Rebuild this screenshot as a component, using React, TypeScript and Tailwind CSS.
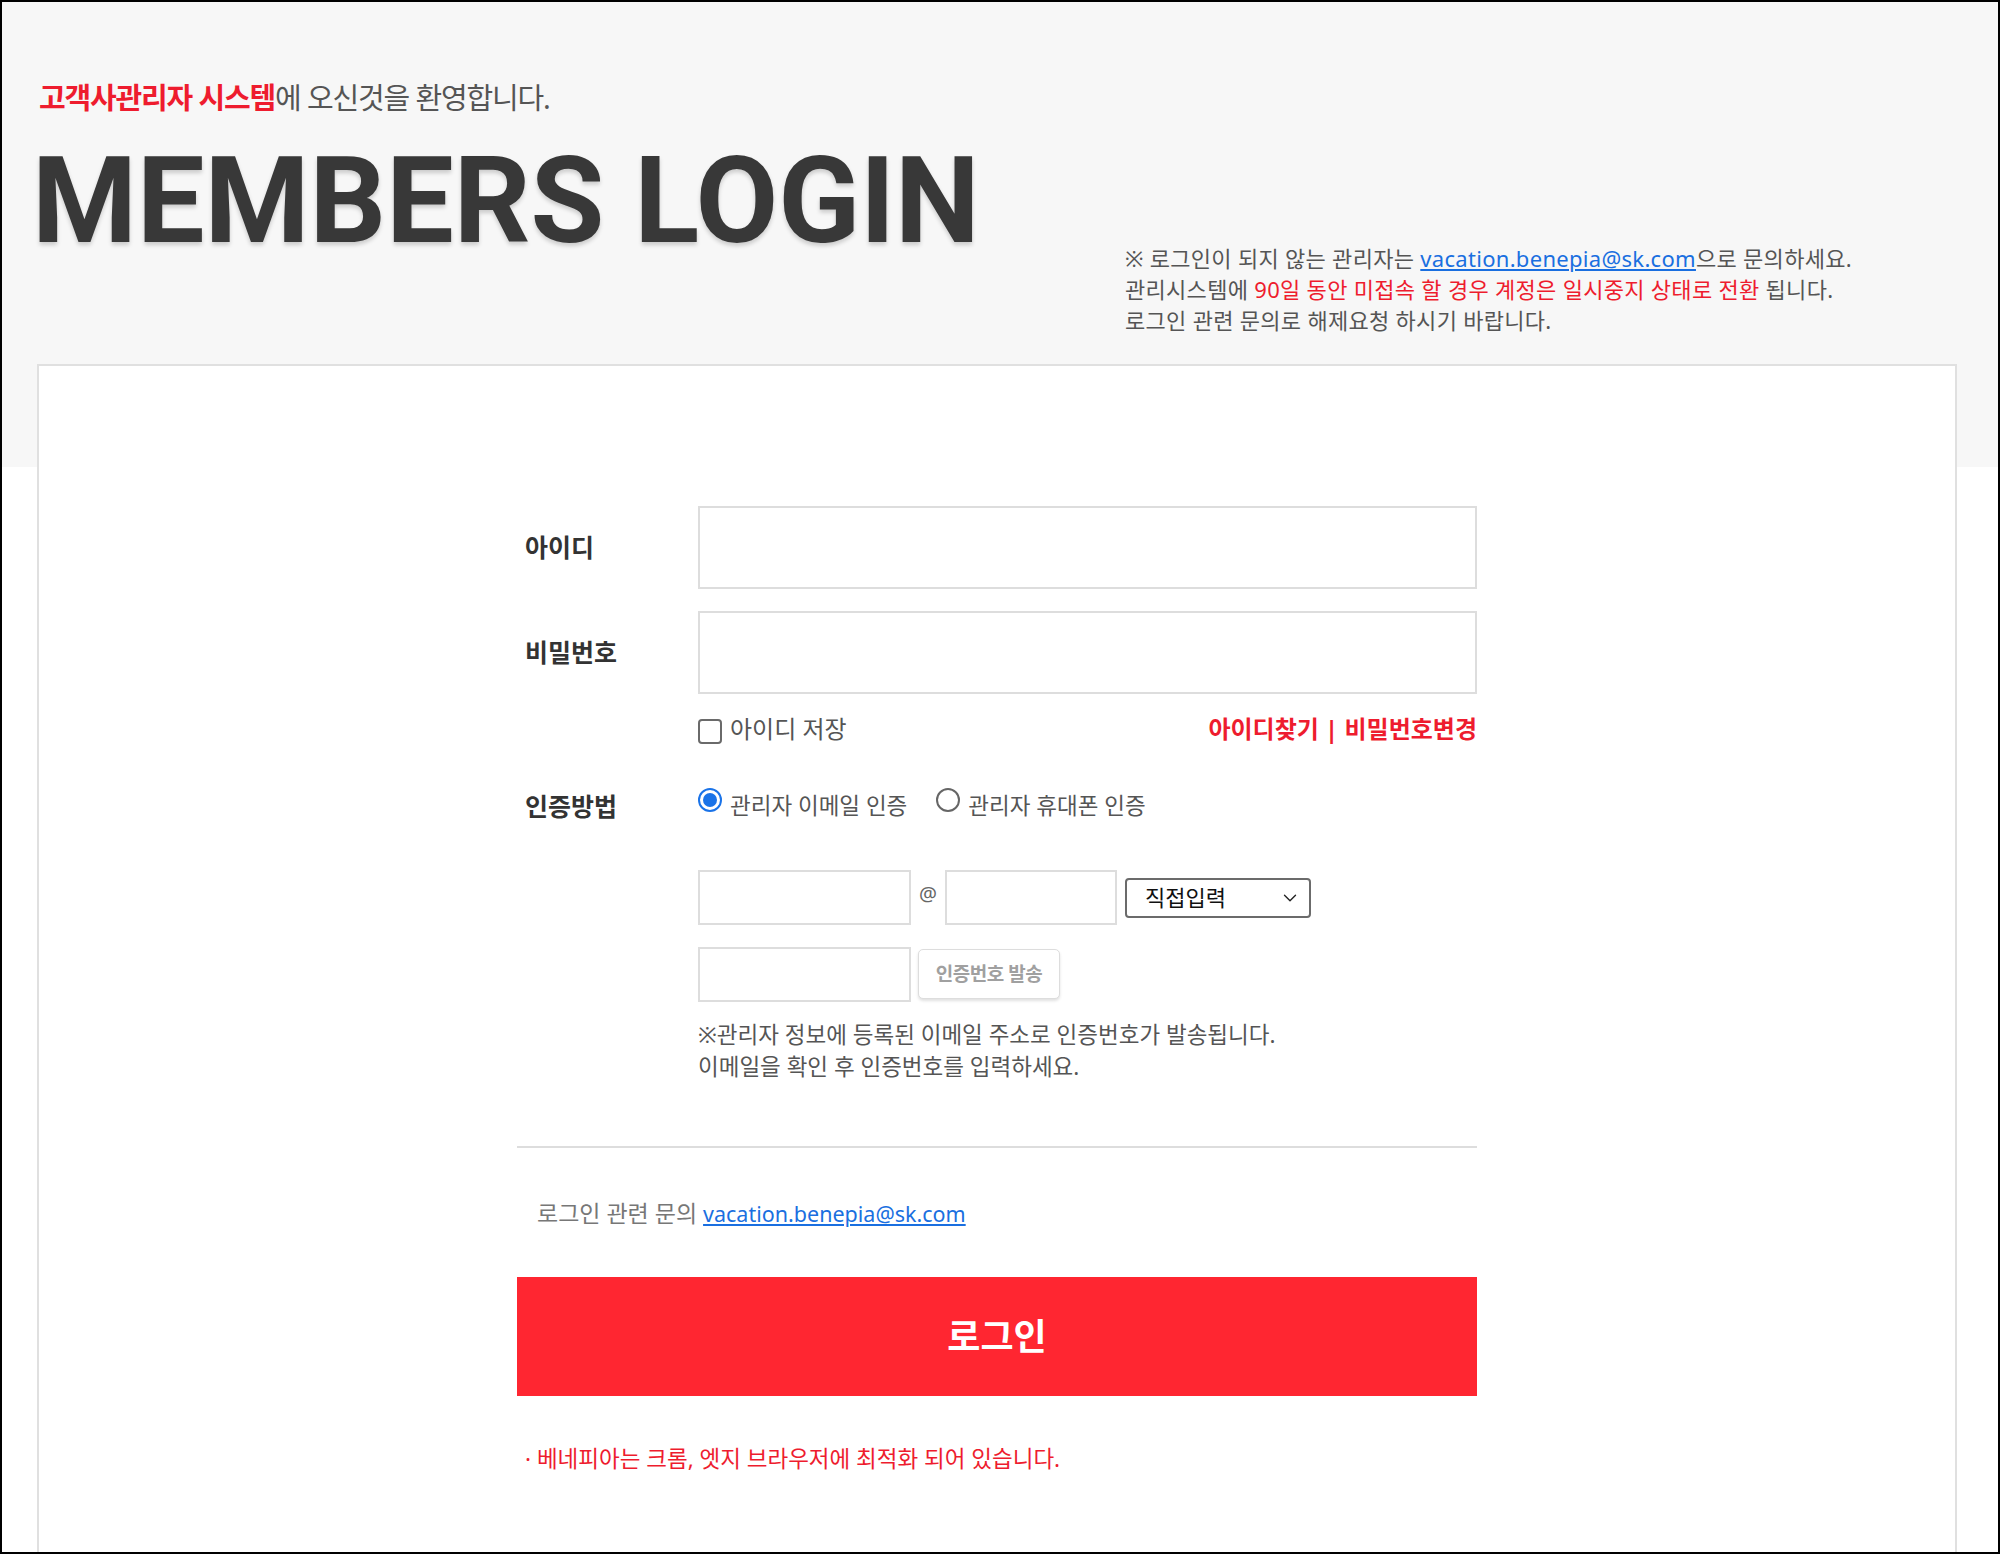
import { ChevronDown } from "lucide-react";

const red = "text-[#ee1c2e]";

function Radio({ checked }: { checked?: boolean }) {
    return checked ? (
        <span className="w-[24px] h-[24px] rounded-full border-2 border-[#1a73e8] bg-white flex items-center justify-center shrink-0">
            <span className="block w-[14px] h-[14px] rounded-full bg-[#1a73e8]" />
        </span>
    ) : (
        <span className="block w-[24px] h-[24px] rounded-full border-2 border-[#666] bg-white shrink-0" />
    );
}

export default function App() {
    return (
        <div className="w-[2000px] h-[1554px] overflow-hidden border-2 border-black bg-[linear-gradient(to_bottom,#f7f7f7_465px,#ffffff_465px)] font-['Noto_Sans','Noto_Sans_CJK_KR',sans-serif] text-[#555]">
            <div className="pl-[35px]">
                {/* header */}
                <div className="flex pt-[76px]">
                    <div className="w-[1088px]">
                        <p className="text-[29px] leading-[40px] tracking-[-0.04em] pl-[2px]">
                            <span className={`${red} font-bold`}>고객사관리자 시스템</span>
                            <span className="text-[#555]">에 오신것을 환영합니다.</span>
                        </p>
                        <h1 className="mt-[23px] -ml-[5px] font-['Roboto',sans-serif] font-bold text-[120px] leading-none tracking-normal text-[#383838] [text-shadow:0_3px_4px_rgba(0,0,0,0.18)]">
                            MEMBERS LOGIN
                        </h1>
                    </div>
                    <div className="pt-[165px] text-[22px] tracking-[0.3px] leading-[31px] text-[#555] whitespace-nowrap">
                        <p>
                            ※ 로그인이 되지 않는 관리자는{" "}
                            <a className="text-[#1a6fe0] underline">vacation.benepia@sk.com</a>으로 문의하세요.
                        </p>
                        <p>
                            관리시스템에 <span className={red}>90일 동안 미접속 할 경우 계정은 일시중지 상태로 전환</span> 됩니다.
                        </p>
                        <p>로그인 관련 문의로 해제요청 하시기 바랍니다.</p>
                    </div>
                </div>

                {/* card */}
                <div className="mt-[28px] w-[1920px] h-[1300px] border-2 border-[#e0e0e0] bg-white">
                    <div className="w-[960px] mx-auto pt-[140px]">
                        <div className="flex items-center">
                            <label className="w-[181px] pl-[8px] text-[25px] font-bold text-[#333]">아이디</label>
                            <input className="w-[779px] h-[83px] border-2 border-[#ddd] bg-white outline-none px-4" />
                        </div>
                        <div className="flex items-center mt-[22px]">
                            <label className="w-[181px] pl-[8px] text-[25px] font-bold text-[#333]">비밀번호</label>
                            <input type="password" className="w-[779px] h-[83px] border-2 border-[#ddd] bg-white outline-none px-4" />
                        </div>

                        <div className="flex items-center justify-between pl-[181px] mt-[20px] h-[30px]">
                            <div className="flex items-center gap-[8px]">
                                <span className="w-[24px] h-[25px] rounded-[4px] border-2 border-[#6a6a6a] bg-white mt-[4px]" />
                                <span className="text-[24px] text-[#555]">아이디 저장</span>
                            </div>
                            <div className={`text-[24px] font-bold ${red}`}>아이디찾기 | 비밀번호변경</div>
                        </div>

                        <div className="flex items-start mt-[44px]">
                            <label className="w-[181px] pl-[8px] text-[25px] font-bold text-[#333] leading-[36px]">인증방법</label>
                            <div className="flex items-start">
                                <Radio checked />
                                <span className="ml-[8px] text-[22.5px] leading-[36px] text-[#555]">관리자 이메일 인증</span>
                                <span className="ml-[29px]"><Radio /></span>
                                <span className="ml-[8px] text-[22.5px] leading-[36px] text-[#555]">관리자 휴대폰 인증</span>
                            </div>
                        </div>

                        <div className="flex items-center pl-[181px] mt-[46px]">
                            <input className="w-[213px] h-[55px] border-2 border-[#ddd] bg-white outline-none px-3" />
                            <span className="mx-[8px] mb-[8px] text-[20px] text-[#666]">@</span>
                            <input className="w-[172px] h-[55px] border-2 border-[#ddd] bg-white outline-none px-3" />
                            <div className="ml-[8px] w-[186px] h-[40px] border-2 border-[#6b6b6b] rounded-[4px] bg-white flex items-center justify-between pl-[18px] pr-[8px]">
                                <span className="text-[22px] text-[#111]">직접입력</span>
                                <ChevronDown size={22} strokeWidth={1.5} className="text-[#222]" />
                            </div>
                        </div>
                        <div className="flex items-start pl-[181px] mt-[22px]">
                            <input className="w-[213px] h-[55px] border-2 border-[#ddd] bg-white outline-none px-3" />
                            <button className="ml-[7px] mt-[2px] w-[142px] h-[50px] border border-[#ddd] rounded-[5px] bg-white shadow-[0_2px_3px_rgba(0,0,0,0.12)] text-[19px] font-bold tracking-[-0.5px] text-[#a0a0a0]">
                                인증번호 발송
                            </button>
                        </div>

                        <div className="pl-[181px] mt-[17px] text-[22.5px] leading-[32px] text-[#555]">
                            <p>※관리자 정보에 등록된 이메일 주소로 인증번호가 발송됩니다.</p>
                            <p>이메일을 확인 후 인증번호를 입력하세요.</p>
                        </div>

                        <div className="mt-[63px] h-[2px] bg-[#ddd]" />

                        <p className="mt-[49px] pl-[20px] text-[23px] leading-[32px] text-[#777]">
                            로그인 관련 문의 <a className="text-[21.5px] text-[#1a6fe0] underline">vacation.benepia@sk.com</a>
                        </p>

                        <button className="mt-[47px] w-full h-[119px] bg-[#ff2631] text-white text-[36px] font-bold">
                            로그인
                        </button>

                        <p className={`mt-[47px] pl-[8px] text-[22.5px] leading-[32px] ${red}`}>
                            · 베네피아는 크롬, 엣지 브라우저에 최적화 되어 있습니다.
                        </p>
                    </div>
                </div>
            </div>
        </div>
    );
}
